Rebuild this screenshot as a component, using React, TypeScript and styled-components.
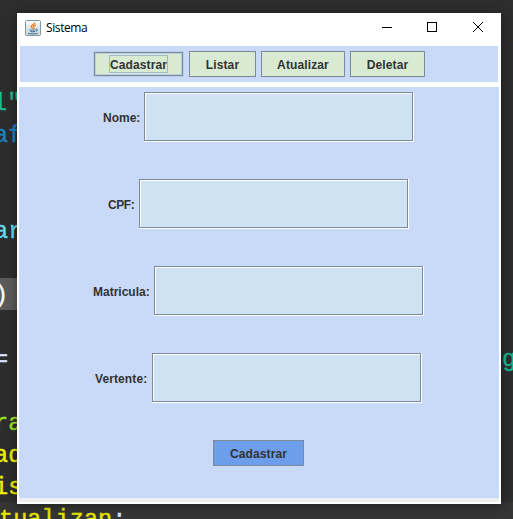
import React from "react";
import styled, { createGlobalStyle } from "styled-components";

const GlobalStyle = createGlobalStyle`
  * { box-sizing: border-box; }
  html, body { margin: 0; padding: 0; background: #2d2d2d; overflow: hidden; }
`;

const Desktop = styled.main`
  position: relative;
  width: 513px;
  height: 519px;
  overflow: hidden;
  background: #2d2d2d;
`;

const Highlight = styled.div<{ $top: number; $height: number; $width: number; $color: string }>`
  position: absolute;
  left: 0;
  top: ${(p) => p.$top}px;
  width: ${(p) => p.$width}px;
  height: ${(p) => p.$height}px;
  background: ${(p) => p.$color};
`;

const Code = styled.span<{ $x: number; $base: number; $color: string }>`
  position: absolute;
  left: ${(p) => p.$x}px;
  top: ${(p) => p.$base - 23}px;
  font: 23.6px/32px "Liberation Mono", monospace;
  -webkit-text-stroke: 0.4px;
  color: ${(p) => p.$color};
  white-space: pre;
`;

const Colon = styled.span`
  color: #d9e2ff;
`;

const Window = styled.section`
  position: absolute;
  left: 17px;
  top: 13px;
  width: 484px;
  height: 491px;
  display: flex;
  flex-direction: column;
  background: #fff;
  box-shadow: 0 2px 10px rgba(0, 0, 0, 0.4);
  font-family: "Liberation Sans", Arial, sans-serif;
`;

const TitleBar = styled.header`
  display: flex;
  align-items: center;
  height: 33px;
  padding: 0 0 4px 8px;
`;

const Title = styled.h1`
  flex: 1;
  margin: 0 0 0 5px;
  font: 400 12px/16px "Open Sans", "Noto Sans", sans-serif;
  letter-spacing: -0.4px;
  color: #000;
`;

const WindowControls = styled.svg`
  width: 137px;
  height: 29px;
  fill: none;
  stroke: #000;
`;

const Toolbar = styled.nav`
  display: flex;
  justify-content: center;
  gap: 5px;
  height: 36px;
  margin: 0 3px 5px;
  padding-top: 5px;
  background: #c9daf8;
`;

const Button = styled.button<{ $width: number; $primary?: boolean }>`
  display: flex;
  align-items: center;
  justify-content: center;
  flex: none;
  width: ${(p) => p.$width}px;
  height: 26px;
  padding: 2px 0 0;
  border: 1px solid #7a8a99;
  border-radius: 0;
  background: ${(p) => (p.$primary ? "#6d9eeb" : "#d9ead3")};
  color: #333;
  font: bold 12px/14px "Liberation Sans", Arial, sans-serif;
  letter-spacing: 0.12px;
`;

const FocusedButton = styled(Button)`
  border-color: #b8cfe5;
  box-shadow: inset 0 0 0 1px #7a8a99, inset 0 0 0 2px #b8cfe5;
`;

const FocusText = styled.span`
  margin-top: -2px;
  padding: 2px 0 0;
  outline: 1px solid #a3b8cc;
`;

const Form = styled.form`
  display: flex;
  flex-direction: column;
  align-items: center;
  gap: 37px;
  height: 411px;
  margin: 0 2px;
  padding: 5px 1px 0 0;
  background: #c9daf8;
`;

const Row = styled.label<{ $labelWidth: number }>`
  display: grid;
  grid-template-columns: ${(p) => p.$labelWidth}px 270px;
  column-gap: 5px;
  align-items: center;
  height: 50px;
  color: #333;
  font: bold 12px/14px "Liberation Sans", Arial, sans-serif;
`;

const LabelText = styled.span<{ $tracking: number }>`
  padding-top: 2px;
  letter-spacing: ${(p) => p.$tracking}px;
  text-align: right;
  white-space: nowrap;
`;

const Field = styled.div`
  display: flex;
  height: 50px;
  border: solid #fff;
  border-width: 0 1px 1px 0;
`;

const Input = styled.input`
  width: 100%;
  height: 100%;
  padding: 0 4px;
  border: 1px solid #7a8a99;
  border-radius: 0;
  outline: 0;
  background: #cfe2f3;
  box-shadow: inset 1px 1px #fff;
`;

const StatusStrip = styled.div`
  height: 4px;
  margin: 0 2px;
  background: #eee;
`;

const codeFragments = [
  { text: "l\"", x: -7, base: 111, color: "#1abc94" },
  { text: "af", x: -6, base: 143, color: "#1b83c0" },
  { text: "ar", x: -6, base: 239, color: "#66d9ef" },
  { text: ")", x: -6, base: 303, color: "#f8f8f2" },
  { text: "=", x: -6, base: 367, color: "#d9e2ff" },
  { text: "g", x: 502, base: 367, color: "#18b892" },
  { text: "ra", x: -6, base: 431, color: "#9be022" },
  { text: "ad", x: -6, base: 463, color: "#f0f000" },
  { text: "is", x: -6, base: 495, color: "#f0f000" },
];

const fields = [
  { label: "Nome:", width: 36, tracking: 0 },
  { label: "CPF:", width: 26, tracking: -0.45 },
  { label: "Matricula:", width: 56, tracking: 0 },
  { label: "Vertente:", width: 52, tracking: 0.1 },
];

function JavaIcon() {
  return (
    <svg width="16" height="16" viewBox="0 0 16 16" fill="none">
      <defs>
        <linearGradient id="tile" x2="0" y2="1">
          <stop stopColor="#fafafa" />
          <stop offset="1" stopColor="#c8d4dc" />
        </linearGradient>
      </defs>
      <rect x=".5" y=".5" width="15" height="15" rx="1" fill="url(#tile)" stroke="#8097a8" />
      <path d="M9.9 2.6C9.8 4.6 6 5 6.3 6.7c.1.8 1 1.2 1.3 2M10.7 4.9C7.6 6.1 8.6 6.8 9 7.5c.3.6-.1 1-.6 1.2" stroke="#ed8122" strokeWidth="1.4" />
      <path d="M4.3 9.8c1.8.5 4.5.5 6.3 0M5.2 11.5c1.6.4 3.3.4 4.8 0M3 13.4c3 .7 6.7.6 9.5-.1M10.8 9.2c2.5-.4 2 2-.1 2.2" stroke="#416f92" />
    </svg>
  );
}

export default function App() {
  return (
    <>
      <GlobalStyle />
      <Desktop>
        <Highlight $top={278} $height={32} $width={17} $color="#5a5a5a" />
        <Highlight $top={502} $height={17} $width={513} $color="#353535" />
        {codeFragments.map((c) => (
          <Code key={c.base + c.text} $x={c.x} $base={c.base} $color={c.color}>{c.text}</Code>
        ))}
        <Code $x={-1} $base={527} $color="#e6e600">tualizan<Colon>:</Colon></Code>
        <Window>
          <TitleBar>
            <JavaIcon />
            <Title>Sistema</Title>
            <WindowControls viewBox="0 0 137 29" shapeRendering="crispEdges">
              <path d="M18 14.5h10" />
              <rect x="63.5" y="9.5" width="9" height="9" />
              <path d="M109 9l10 10M119 9l-10 10" shapeRendering="auto" />
            </WindowControls>
          </TitleBar>
          <Toolbar>
            <FocusedButton $width={91}><FocusText>Cadastrar</FocusText></FocusedButton>
            <Button $width={67}>Listar</Button>
            <Button $width={84}>Atualizar</Button>
            <Button $width={75}>Deletar</Button>
          </Toolbar>
          <Form>
            {fields.map((f) => (
              <Row key={f.label} $labelWidth={f.width}>
                <LabelText $tracking={f.tracking}>{f.label}</LabelText>
                <Field><Input aria-label={f.label} /></Field>
              </Row>
            ))}
            <Button type="button" $width={91} $primary>Cadastrar</Button>
          </Form>
          <StatusStrip />
        </Window>
      </Desktop>
    </>
  );
}
